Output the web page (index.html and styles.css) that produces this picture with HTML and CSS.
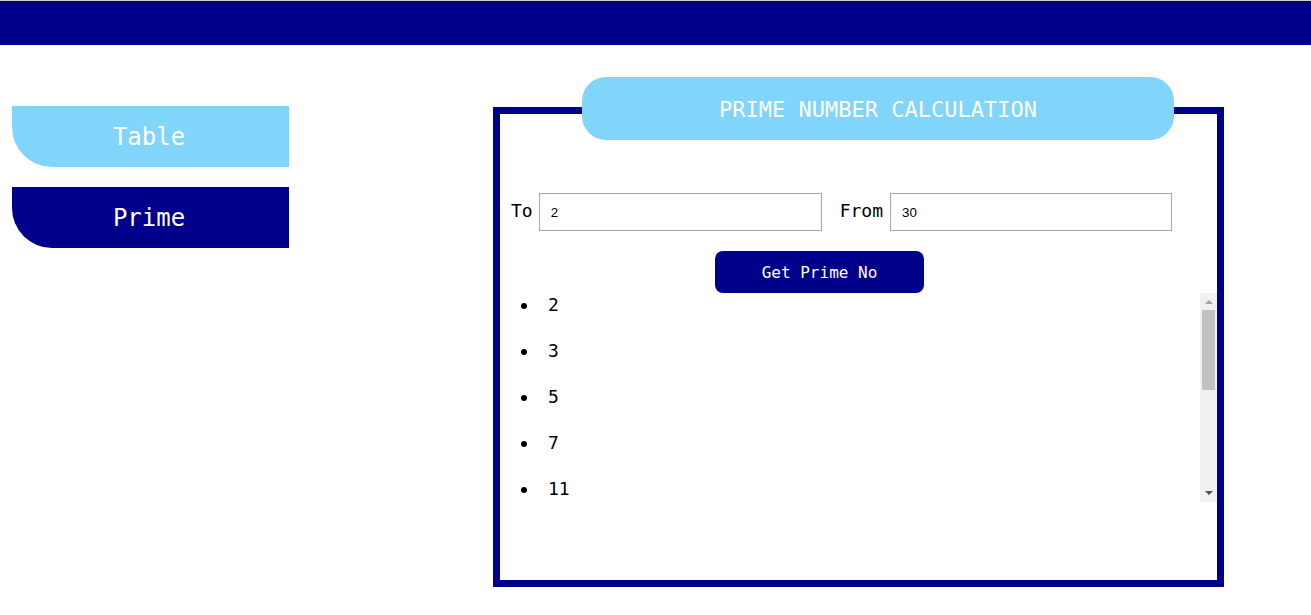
FILE: index.html
```html
<!DOCTYPE html>
<html lang="en">
<head>
<meta charset="utf-8">
<title>Prime Number Calculation</title>
<link rel="stylesheet" href="styles.css">
</head>
<body>
<header class="topbar"></header>
<div class="layout">
  <nav class="sidebar">
    <a class="nav-btn nav-btn--light">Table</a>
    <a class="nav-btn nav-btn--dark">Prime</a>
  </nav>
  <section class="panel">
    <h1 class="panel-title">PRIME NUMBER CALCULATION</h1>
    <div class="range-row">
      <label class="range-label" for="to">To</label>
      <input class="range-input range-input--first" id="to" type="text" value="2">
      <label class="range-label range-label--from" for="from">From</label>
      <input class="range-input range-input--second" id="from" type="text" value="30">
    </div>
    <button class="get-btn" type="button">Get Prime No</button>
    <div class="results-wrap">
      <ul class="results">
        <li>2</li>
        <li>3</li>
        <li>5</li>
        <li>7</li>
        <li>11</li>
        <li>13</li>
        <li>17</li>
        <li>19</li>
        <li>23</li>
        <li>29</li>
      </ul>
      <div class="scrollbar" aria-hidden="true">
        <div class="sb-btn"><span class="sb-arrow sb-arrow--up"></span></div>
        <div class="sb-thumb"></div>
        <div class="sb-space"></div>
        <div class="sb-btn"><span class="sb-arrow sb-arrow--down"></span></div>
      </div>
    </div>
  </section>
</div>
</body>
</html>
```
FILE: styles.css
```css
html, body {
  margin: 0;
  padding: 0;
  background: #ffffff;
}

body {
  font-family: "DejaVu Sans Mono", monospace;
  color: #000000;
}

.topbar {
  height: 44px;
  border-top: 1px solid #cfcfcf;
  background: #00008b;
}

.layout {
  display: flex;
  align-items: flex-start;
}

.sidebar {
  display: flex;
  flex-direction: column;
  gap: 20px;
  width: 277px;
  margin: 61px 0 0 12px;
}

.nav-btn {
  box-sizing: border-box;
  display: flex;
  align-items: center;
  justify-content: center;
  height: 61px;
  padding-right: 3px;
  font-size: 24px;
  color: #ffffff;
  border-bottom-left-radius: 40px;
  cursor: pointer;
}

.nav-btn--light {
  background: #81d4fa;
}

.nav-btn--dark {
  background: #00008b;
}

.panel {
  position: relative;
  width: 717px;
  height: 466px;
  margin: 62px 0 0 204px;
  border: 7px solid #00008b;
}

.panel-title {
  position: absolute;
  left: 82px;
  top: -37px;
  width: 592px;
  height: 63px;
  margin: 0;
  padding-top: 2px;
  box-sizing: border-box;
  display: flex;
  align-items: center;
  justify-content: center;
  border-radius: 24px;
  background: #81d4fa;
  color: #ffffff;
  font-size: 22px;
  font-weight: normal;
}

.range-row {
  display: flex;
  align-items: baseline;
  padding: 79px 0 0 11px;
}

.range-label {
  font-size: 18px;
  margin-right: 6px;
}

.range-label--from {
  margin-right: 7px;
}

.range-input {
  box-sizing: border-box;
  height: 38px;
  padding: 0 11px;
  border: 1px solid #a9a9a9;
  font-family: "Liberation Sans", Arial, sans-serif;
  font-size: 13.33px;
  color: #000000;
  outline: none;
}

.range-input--first {
  width: 283px;
  margin-right: 18px;
}

.range-input--second {
  width: 282px;
}

.get-btn {
  display: block;
  width: 209px;
  height: 42px;
  margin: 20px 0 0 215px;
  border: none;
  border-radius: 8px;
  background: #00008b;
  color: #ffffff;
  font-family: "DejaVu Sans Mono", monospace;
  font-size: 16px;
}

.results-wrap {
  display: flex;
  height: 209px;
}

.results {
  flex: 1;
  height: 209px;
  margin: 0;
  padding: 0 0 0 39px;
  overflow: hidden;
  list-style: disc;
}

.results li {
  box-sizing: border-box;
  height: 46px;
  padding: 1px 0 0 9px;
  font-size: 18px;
  line-height: 21px;
}

.scrollbar {
  display: flex;
  flex-direction: column;
  width: 17px;
  background: #f1f1f1;
}

.sb-btn {
  display: flex;
  align-items: center;
  justify-content: center;
  height: 17px;
}

.sb-arrow {
  width: 0;
  height: 0;
  border-left: 4px solid transparent;
  border-right: 4px solid transparent;
}

.sb-arrow--up {
  border-bottom: 4px solid #a3a3a3;
}

.sb-arrow--down {
  border-top: 4px solid #505050;
  margin-top: -2px;
}

.sb-thumb {
  height: 80px;
  margin: 0 2px;
  background: #c1c1c1;
}

.sb-space {
  flex: 1;
}
```
